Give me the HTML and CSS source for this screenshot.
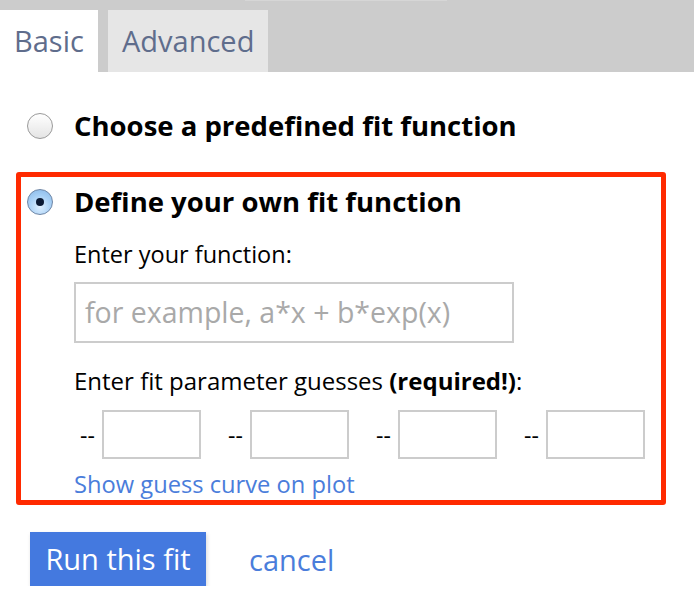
FILE: index.html
```html
<!DOCTYPE html>
<html>
<head>
<meta charset="utf-8">
<link rel="stylesheet" href="styles.css">
</head>
<body>
<div class="tabbar">
  <div class="topline"></div>
  <div class="tabs">
    <div class="tab tab-active">Basic</div>
    <div class="tab tab-inactive">Advanced</div>
  </div>
</div>
<div class="content">
  <div class="option option-first">
    <span class="radio"></span>
    <span class="option-label">Choose a predefined fit function</span>
  </div>
  <div class="panel">
    <div class="option option-inner">
      <span class="radio radio-checked"><span class="dot"></span></span>
      <span class="option-label">Define your own fit function</span>
    </div>
    <div class="field">
      <div class="label">Enter your function:</div>
      <div class="fn-input">for example, a*x + b*exp(x)</div>
      <div class="label label-params">Enter fit parameter guesses <b>(required!)</b>:</div>
      <div class="guesses">
        <div class="guess"><span class="dash">--</span><span class="box"></span></div>
        <div class="guess"><span class="dash">--</span><span class="box"></span></div>
        <div class="guess"><span class="dash">--</span><span class="box"></span></div>
        <div class="guess"><span class="dash">--</span><span class="box"></span></div>
      </div>
      <div class="link">Show guess curve on plot</div>
    </div>
  </div>
  <div class="actions">
    <div class="btn">Run this fit</div>
    <div class="cancel">cancel</div>
  </div>
</div>
</body>
</html>
```
FILE: styles.css
```css
html, body {
  margin: 0;
  padding: 0;
  background: #fff;
  font-family: "Open Sans", "DejaVu Sans", sans-serif;
  color: #000;
}
.tabbar {
  background: #cccccc;
  height: 72px;
  position: relative;
}
.topline {
  position: absolute;
  left: 245px;
  top: 0;
  width: 202px;
  height: 1px;
  background: #d6d6d6;
}
.tabs {
  display: flex;
  gap: 10px;
  padding-top: 10px;
}
.tab {
  height: 62px;
  box-sizing: border-box;
  font-size: 29px;
  color: #5f6d8c;
  line-height: 62px;
}
.tab-active {
  background: #fff;
  width: 98px;
  padding-left: 14px;
}
.tab-inactive {
  background: #e6e6e6;
  width: 160px;
  padding-left: 14px;
}
.content {
  padding-top: 36px;
}
.option {
  display: flex;
  align-items: center;
  height: 36px;
}
.option-first {
  padding-left: 27px;
}
.radio {
  width: 24px;
  height: 24px;
  border-radius: 50%;
  border: 1px solid #9a9a9a;
  background: linear-gradient(#ffffff, #e4e4e4);
  margin-right: 21px;
  display: flex;
  align-items: center;
  justify-content: center;
  flex: none;
}
.radio-checked {
  border-color: #6e86a6;
  background: radial-gradient(circle at 50% 70%, #e0f0ff 0%, #a6cff5 55%, #86b6e6 100%);
}
.dot {
  width: 8px;
  height: 8px;
  border-radius: 50%;
  background: #0c1a33;
}
.option-label {
  font-size: 27.5px;
  font-weight: 700;
  line-height: 36px;
}
.panel {
  margin-top: 28px;
  margin-left: 16px;
  width: 650px;
  box-sizing: border-box;
  border: 5px solid #ff2a00;
  border-radius: 3px;
  padding: 7px 0 0 6px;
  height: 333px;
}
.field {
  padding-left: 47px;
}
.label {
  font-size: 23.5px;
  line-height: 32px;
  margin-top: 18px;
}
.label b {
  font-weight: 700;
}
.fn-input {
  margin-top: 12px;
  width: 440px;
  height: 61px;
  box-sizing: border-box;
  border: 2px solid #cccccc;
  font-size: 28.5px;
  color: #a9a9a9;
  line-height: 57px;
  padding-left: 9px;
  white-space: nowrap;
}
.label-params {
  margin-top: 22px;
  font-size: 24px;
}
.guesses {
  display: flex;
  margin-top: 13px;
  margin-left: 6px;
  gap: 27px;
}
.guess {
  display: flex;
  align-items: center;
}
.dash {
  font-size: 23px;
  width: 22px;
}
.box {
  width: 99px;
  height: 49px;
  box-sizing: border-box;
  border: 2px solid #cccccc;
}
.link {
  font-size: 23.7px;
  color: #4a7ddb;
  line-height: 32px;
  margin-top: 9px;
}
.actions {
  display: flex;
  align-items: center;
  margin-top: 27px;
  padding-left: 30px;
}
.btn {
  width: 176px;
  height: 54px;
  background: #4479df;
  color: #fff;
  font-size: 29px;
  line-height: 54px;
  text-align: center;
  box-shadow: 1px 2px 4px rgba(0,0,0,0.15);
}
.cancel {
  margin-left: 43px;
  font-size: 29px;
  color: #4a7ddb;
}
```
